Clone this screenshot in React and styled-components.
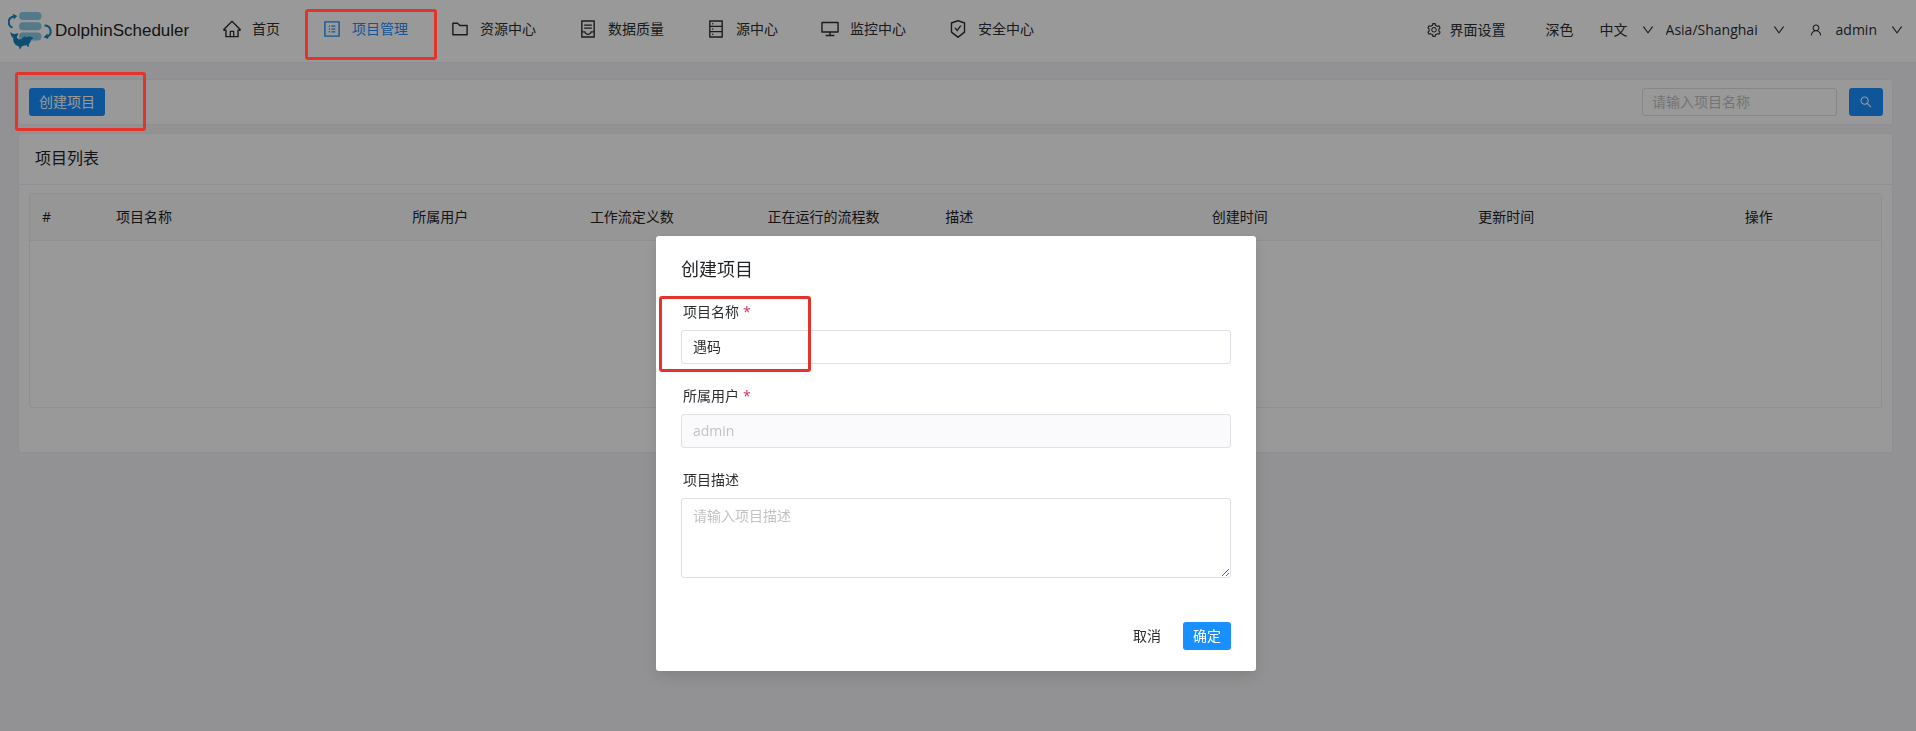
import React, { useState } from 'react'
import styled, { createGlobalStyle } from 'styled-components'
import {
    AiOutlineHome,
    AiOutlineProfile,
    AiOutlineFolder,
    AiOutlineContainer,
    AiOutlineDatabase,
    AiOutlineDesktop,
    AiOutlineSafetyCertificate,
    AiOutlineSetting,
    AiOutlineUser,
    AiOutlineDown,
    AiOutlineSearch,
} from 'react-icons/ai'

const colors = {
    primary: `#1890ff`,
    title: `#1f2225`,
    text: `#2b2e31`,
    border: `#efeff5`,
    input_border: `#e0e0e6`,
    placeholder: `#c2c2c2`,
    background: `#f4f4f7`,
    required: `#d03050`,
    marker: `#e3342b`,
}

const font_family = `"Open Sans", "Noto Sans CJK SC", sans-serif`

let menu = [
    { title: `首页`, Icon: AiOutlineHome },
    { title: `项目管理`, Icon: AiOutlineProfile, active: true },
    { title: `资源中心`, Icon: AiOutlineFolder },
    { title: `数据质量`, Icon: AiOutlineContainer },
    { title: `源中心`, Icon: AiOutlineDatabase },
    { title: `监控中心`, Icon: AiOutlineDesktop },
    { title: `安全中心`, Icon: AiOutlineSafetyCertificate },
]

let columns = [
    { title: `#`, width: 50 },
    { title: `项目名称`, width: 200 },
    { title: `所属用户`, width: 120 },
    { title: `工作流定义数`, width: 120 },
    { title: `正在运行的流程数`, width: 120 },
    { title: `描述`, width: 180 },
    { title: `创建时间`, width: 180 },
    { title: `更新时间`, width: 180 },
    { title: `操作`, width: 100 },
]

let Logo = () => (
    <svg width="45" height="38" viewBox="0 0 45 38" aria-hidden="true">
        <g fill="#8ccae6">
            <rect x="11" y="0" width="22.5" height="8" rx="4" />
            <rect x="11" y="10.3" width="22.5" height="8" rx="4" />
            <rect x="11" y="20.6" width="22.5" height="8" rx="4" />
        </g>
        <g fill="none" stroke="#1a87c2" strokeWidth="2">
            <path d="M6 4.5C-1 5.500-.5 14 4.500 15.500" />
            <path d="M36.500 13.500c7 0 8.500 9 2 11.500" />
        </g>
        <path d="M4.800 1.800L9.200 4 5.800 7.500zM35.500 25.200l4-3.700.8 5.500z" fill="#1a87c2" />
        <path
            d="M2.500 20c1.500 1.800 3 1.600 4 2.300 1.400-.8 2.600-.6 3.800-1.300-.2 2.200-1.300 3.200-1.500 4.500 1.500 2 3.400 2.300 5.200 1.500.6-1.500 1.800-2.500 3.800-2.700 0 .8-.3 1.200-.5 1.700 2-1.500 4.300-1.800 6-1 .8.400 1.400.7 2 .8-.5 1-1.600 1.500-2.300 2-.3 2.200-1 3.500-2.200 4.200.3 1 .2 2-.2 3-1-.3-1.700-1.200-2.200-2-1.800.8-3.600 1-4.400 1.200-.7 1-1 2-2.200 3.300-.2-1.200-.4-2.200-1.300-3.200-3.800-1-5.500-4.500-5.300-8.300C3.500 24.500 2.300 22.500 2.500 20z"
            fill="#1482bf"
        />
    </svg>
)

let main = () => {
    let [dialog_visible, set_dialog_visible] = useState(true)
    let [name, set_name] = useState(`遇码`)
    let [description, set_description] = useState(``)
    return (
        <Page>
            <GlobalStyle />
            <Header>
                <Brand href="#">
                    <Logo />
                    DolphinScheduler
                </Brand>
                <Menu>
                    {
                        menu.map(({ title, Icon, active }) => (
                            <MenuItem key={title} href="#" $active={active} >
                                <Icon size={20} />
                                {title}
                                {active && <MenuMarker />}
                            </MenuItem>
                        ))
                    }
                </Menu>
                <Tools>
                    <SettingsButton type="button">
                        <AiOutlineSetting size={16} />
                        界面设置
                    </SettingsButton>
                    <ToolButton type="button">深色</ToolButton>
                    <SelectWrapper>
                        <ToolSelect aria-label="语言" defaultValue="zh">
                            <option value="zh">中文</option>
                        </ToolSelect>
                        <AiOutlineDown size={14} />
                    </SelectWrapper>
                    <SelectWrapper>
                        <ToolSelect aria-label="时区" defaultValue="sh">
                            <option value="sh">Asia/Shanghai</option>
                        </ToolSelect>
                        <AiOutlineDown size={14} />
                    </SelectWrapper>
                    <UserButton type="button">
                        <AiOutlineUser size={14} />
                        admin
                        <AiOutlineDown size={14} />
                    </UserButton>
                </Tools>
            </Header>
            <Content>
                <Toolbar>
                    <CreateWrapper>
                        <PrimaryButton type="button" onClick={() => { set_dialog_visible(true) }} >创建项目</PrimaryButton>
                        <CreateMarker />
                    </CreateWrapper>
                    <Search onSubmit={(e) => { e.preventDefault() }} >
                        <SearchInput type="text" aria-label="项目名称" placeholder="请输入项目名称" />
                        <SearchButton type="submit" aria-label="搜索">
                            <AiOutlineSearch size={14} />
                        </SearchButton>
                    </Search>
                </Toolbar>
                <Card>
                    <CardTitle>项目列表</CardTitle>
                    <CardBody>
                        <TableFrame>
                            <Table>
                                <colgroup>
                                    {columns.map((item) => <col key={item.title} width={item.width} />)}
                                </colgroup>
                                <thead>
                                    <tr>
                                        {columns.map((item) => <Th key={item.title} scope="col" >{item.title}</Th>)}
                                    </tr>
                                </thead>
                            </Table>
                        </TableFrame>
                    </CardBody>
                </Card>
            </Content>
            {
                dialog_visible && <Mask>
                    <Dialog role="dialog" aria-modal="true" aria-labelledby="dialog_title">
                        <DialogTitle id="dialog_title">创建项目</DialogTitle>
                        <Field>
                            <Label htmlFor="name">项目名称<Required>*</Required></Label>
                            <Input id="name" type="text" required value={name} onChange={(e) => { set_name(e.target.value) }} />
                            <FieldMarker />
                        </Field>
                        <Field>
                            <Label htmlFor="user">所属用户<Required>*</Required></Label>
                            <Input id="user" type="text" disabled value="admin" />
                        </Field>
                        <Field>
                            <Label htmlFor="description">项目描述</Label>
                            <TextArea
                                id="description"
                                placeholder="请输入项目描述"
                                value={description}
                                onChange={(e) => { set_description(e.target.value) }}
                            />
                        </Field>
                        <DialogFooter>
                            <TextButton type="button" onClick={() => { set_dialog_visible(false) }} >取消</TextButton>
                            <PrimaryButton type="button">确定</PrimaryButton>
                        </DialogFooter>
                    </Dialog>
                </Mask>
            }
        </Page>
    )
}

const GlobalStyle = createGlobalStyle`
* {
    box-sizing: border-box;
}
body {
    margin: 0;
    color: ${colors.text};
    background-color: ${colors.background};
    font-family: ${font_family};
    font-size: 14px;
    line-height: 22px;
}
button, input, select, textarea {
    margin: 0;
    color: inherit;
    font: inherit;
}
svg {
    flex-shrink: 0;
}`

const Page = styled.div`
min-height: 100vh;`

const Header = styled.header`
display: flex;
align-items: center;
height: 63px;
padding: 0 12px 0 8px;
background-color: white;
border-bottom: 1px solid ${colors.border};`

const Brand = styled.a`
display: flex;
align-items: center;
gap: 2px;
width: 214px;
color: ${colors.title};
font-family: "Liberation Sans", sans-serif;
font-size: 17px;
text-decoration: none;`

const Menu = styled.nav`
display: flex;
flex: 1;
gap: 42px;
padding-bottom: 4px;`

const MenuItem = styled.a`
position: relative;
display: flex;
align-items: center;
gap: 10px;
white-space: nowrap;
text-decoration: none;
color: ${props => props.$active ? colors.primary : colors.text};`

const Marker = styled.span`
position: absolute;
z-index: 20;
border: 3px solid ${colors.marker};
border-radius: 3px;
pointer-events: none;`

const MenuMarker = styled(Marker)`
inset: -9px -29px -20px -17px;`

const Tools = styled.div`
display: flex;
align-items: center;
padding-bottom: 2px;
white-space: nowrap;`

const ToolButton = styled.button`
display: flex;
align-items: center;
margin-right: 26px;
padding: 0;
border: 0;
background: none;
cursor: pointer;`

const SettingsButton = styled(ToolButton)`
gap: 8px;
margin-right: 40px;`

const UserButton = styled(ToolButton)`
gap: 13px;
margin: 0 0 0 12px;`

const SelectWrapper = styled.div`
display: flex;
align-items: center;
gap: 13px;
margin-right: 11px;`

const ToolSelect = styled.select`
padding: 0;
border: 0;
appearance: none;
background: none;`

const Content = styled.main`
display: flex;
flex-direction: column;
gap: 8px;
padding: 16px 23px 16px 18px;`

const Card = styled.section`
background-color: white;
border: 1px solid ${colors.border};
border-radius: 3px;`

const Toolbar = styled(Card)`
display: flex;
align-items: center;
justify-content: space-between;
padding: 8px 9px 8px 10px;`

const CreateWrapper = styled.div`
position: relative;`

const CreateMarker = styled(Marker)`
inset: -16px -41px -15px -14px;`

const PrimaryButton = styled.button`
display: flex;
align-items: center;
justify-content: center;
height: 28px;
padding: 0 10px;
border: 0;
border-radius: 3px;
color: white;
background-color: ${colors.primary};
cursor: pointer;`

const TextButton = styled(PrimaryButton)`
color: ${colors.text};
background: none;`

const Search = styled.form`
display: flex;
gap: 12px;`

const SearchButton = styled(PrimaryButton)`
width: 34px;
padding: 0;`

const Input = styled.input`
display: block;
width: 100%;
height: 34px;
padding: 0 11px 2px;
border: 1px solid ${colors.input_border};
border-radius: 3px;
background-color: white;
&::placeholder {
    color: ${colors.placeholder};
}
&:disabled {
    color: ${colors.placeholder};
    background-color: #fafafc;
}`

const SearchInput = styled(Input)`
width: 195px;
height: 28px;
padding: 0 9px 2px;`

const CardTitle = styled.h2`
margin: 0;
padding: 12px 16px 14px;
border-bottom: 1px solid ${colors.border};
color: ${colors.title};
font-size: 16px;
font-weight: 400;
line-height: 24px;`

const CardBody = styled.div`
padding: 8px 10px 44px;`

const TableFrame = styled.div`
min-height: 215px;
border: 1px solid ${colors.border};
border-radius: 3px;`

const Table = styled.table`
width: 100%;
table-layout: fixed;
border-collapse: collapse;`

const Th = styled.th`
height: 46px;
padding: 0 12px;
border-bottom: 1px solid ${colors.border};
color: ${colors.title};
background-color: #fafafc;
font-weight: 400;
text-align: left;
white-space: nowrap;`

const Mask = styled.div`
position: fixed;
inset: 0;
z-index: 10;
display: flex;
align-items: flex-start;
justify-content: center;
padding: 236px 4px 0 0;
background-color: rgba(0, 0, 0, 0.4);`

const Dialog = styled.div`
width: 600px;
padding: 20px 25px 21px;
border-radius: 3px;
background-color: white;
box-shadow: 0 6px 16px rgba(0, 0, 0, 0.12);`

const DialogTitle = styled.h1`
margin: 0 0 22px;
color: ${colors.title};
font-size: 18px;
font-weight: 400;
line-height: 26px;`

const Field = styled.div`
position: relative;
margin-bottom: 24px;`

const FieldMarker = styled(Marker)`
top: -8px;
left: -22px;
width: 152px;
height: 76px;`

const Label = styled.label`
display: block;
height: 26px;
padding: 0 2px;
line-height: 16px;`

const Required = styled.span`
margin-left: 4px;
color: ${colors.required};`

const TextArea = styled.textarea`
display: block;
width: 100%;
height: 80px;
padding: 6px 11px;
border: 1px solid ${colors.input_border};
border-radius: 3px;
resize: vertical;
&::placeholder {
    color: ${colors.placeholder};
}`

const DialogFooter = styled.div`
display: flex;
justify-content: flex-end;
gap: 12px;
padding-top: 20px;`

export default main
